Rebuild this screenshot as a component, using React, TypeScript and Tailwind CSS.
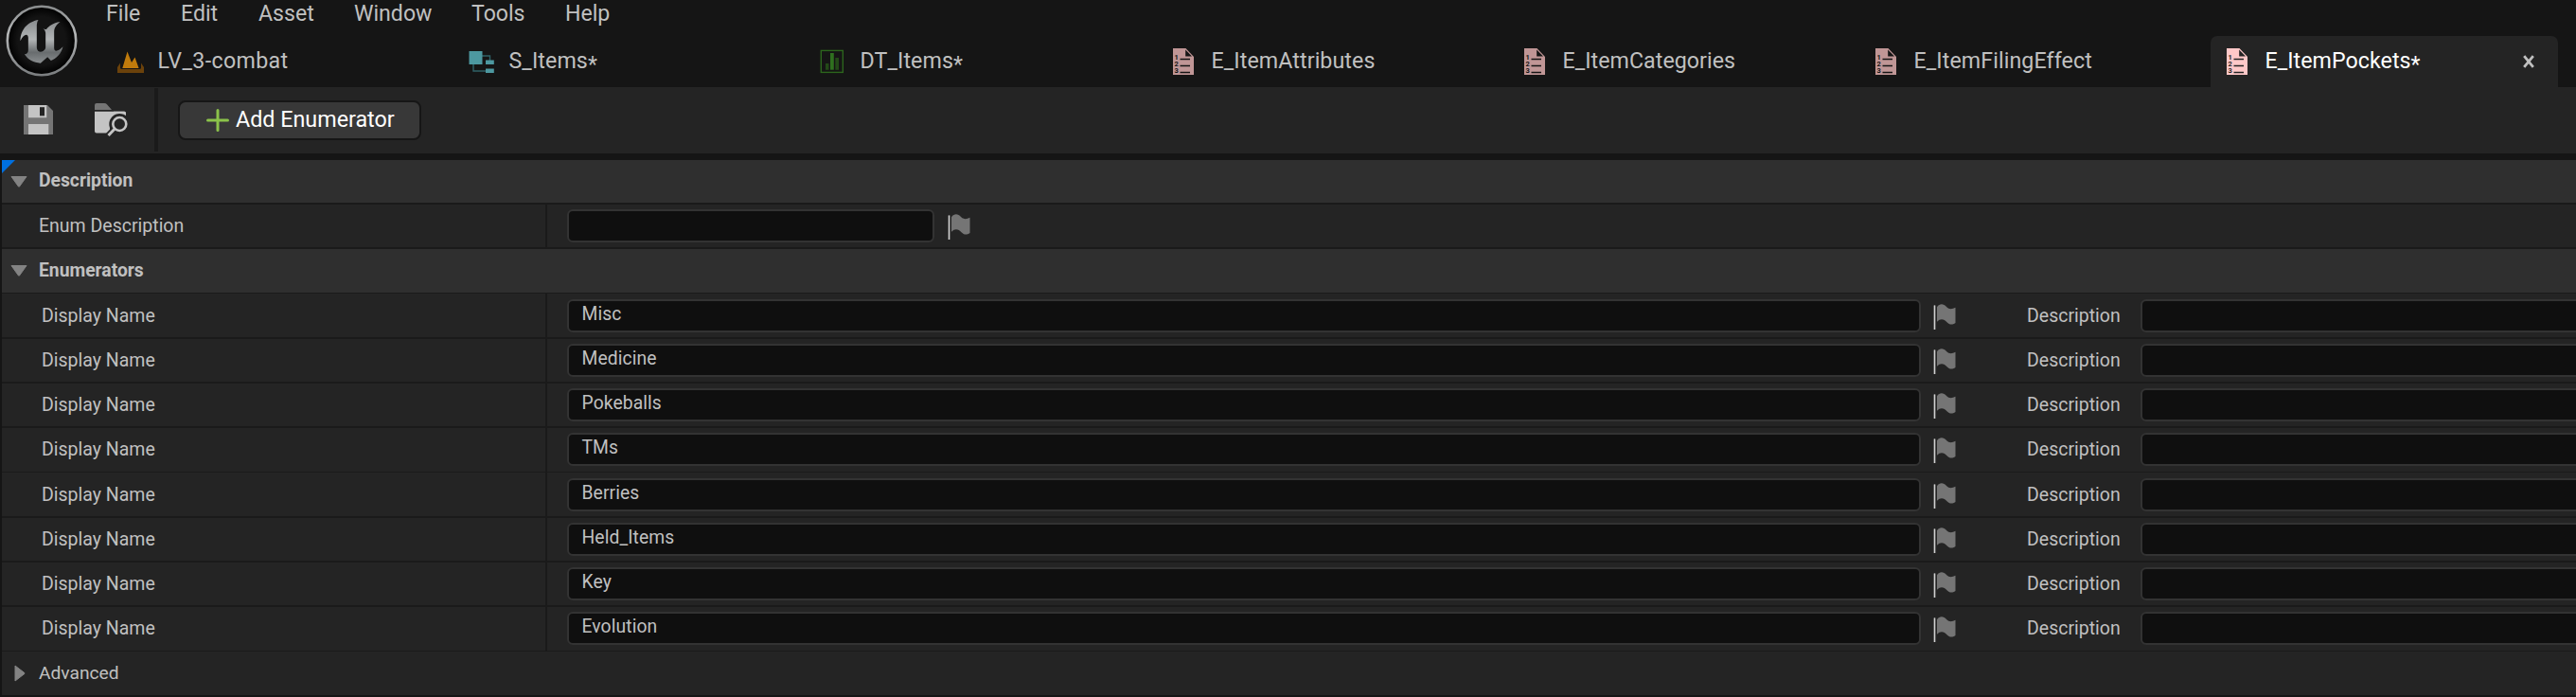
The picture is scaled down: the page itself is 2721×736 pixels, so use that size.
import React from "react";

const MENU = [
  { label: "File", cls: "w-[79px]" },
  { label: "Edit", cls: "w-[82px]" },
  { label: "Asset", cls: "w-[101px]" },
  { label: "Window", cls: "w-[124px]" },
  { label: "Tools", cls: "w-[99px]" },
  { label: "Help", cls: "w-[60px]" },
];

function Logo() {
  return (
    <svg viewBox="0 0 78 78" className="h-[78px] w-[78px]">
      <defs>
        <linearGradient id="ring" x1="0" y1="0" x2="0" y2="1">
          <stop offset="0" stopColor="#8b8e8f" />
          <stop offset="0.4" stopColor="#b4b6b7" />
          <stop offset="1" stopColor="#7b7e80" />
        </linearGradient>
        <linearGradient id="glyph" x1="0" y1="0" x2="0" y2="1">
          <stop offset="0" stopColor="#888b8d" />
          <stop offset="0.45" stopColor="#b2b5b6" />
          <stop offset="0.75" stopColor="#686c6e" />
          <stop offset="1" stopColor="#8a8e90" />
        </linearGradient>
        <radialGradient id="disc">
          <stop offset="0.7" stopColor="#131313" />
          <stop offset="1" stopColor="#000000" />
        </radialGradient>
      </defs>
      <circle cx="39" cy="39" r="36.2" fill="url(#disc)" stroke="url(#ring)" strokeWidth="2.6" />
      <path
        transform="translate(-4.5 -3) scale(0.33333)"
        fill="url(#glyph)"
        d="M120 60C92 65 64 84 63 127C69 113 76 106 83 107Q88 108 88 116V156Q88 168 76 169C88 187 105 196 127 197L149 178L160 189C178 182 192 168 198 145C190 154 181 159 175 158Q170 157 170 150V96C171 82 180 74 189 66C166 70 153 80 146 89Q141 91 135 87Q143 93 143 101V148Q143 156 135 159Q126 164 119 158Q115 154 115 148V76Q115 66 120 60Z"
      />
    </svg>
  );
}

function LevelIcon() {
  return (
    <svg viewBox="0 0 28 28" className="h-7 w-7">
      <path d="M3 15.5V21.5H25V15.5L28 20V26H0V20Z" fill="#6b420b" />
      <path d="M4 22L10.5 3.5L15 15L18.5 9.5L24 22Z" fill="#151515" />
      <path d="M5.3 21L10.5 3.5L15 15L18.5 9.5L22.6 21Z" fill="#c07b0c" />
    </svg>
  );
}

function StructIcon() {
  return (
    <svg viewBox="0 0 28 28" className="h-7 w-7">
      <path d="M14 8H22.5V13M5 16V24H19" fill="none" stroke="#2f6167" strokeWidth="1.4" />
      <path d="M0.5 3H14.5V17H0.5ZM18 12.5H26.8V17H18ZM18 21.5H26.8V26H18Z" fill="#4d98a0" />
    </svg>
  );
}

function TableIcon() {
  return (
    <svg viewBox="0 0 28 28" className="h-7 w-7">
      <rect x="1.3" y="2.4" width="23" height="23" fill="none" stroke="#2c651d" strokeWidth="1.4" />
      <path d="M6 16H9.5V22.7H6ZM16.3 10H20V22.7H16.3Z" fill="#234918" />
      <path d="M11 5H14.8V22.7H11Z" fill="#2f701f" />
    </svg>
  );
}

function EnumIcon({ active }: { active?: boolean }) {
  const ink = active ? "#242424" : "#151515";
  return (
    <svg viewBox="0 0 28 28" className="h-7 w-7">
      <path d="M2 0H15.5L24 9V28H2Z" fill={active ? "#ffc8c8" : "#c09696"} />
      <path d="M15.2 1.4V8.5H22Z" fill={ink} />
      <path d="M9.5 11.5H20M9.5 18.5H20M9.5 25.5H20" stroke={ink} strokeWidth="1.7" />
      <g fill={ink} fontFamily="Roboto, sans-serif" fontSize="7.5" fontWeight="700">
        <text x="3.6" y="12.2">1</text>
        <text x="3.6" y="19.3">2</text>
        <text x="3.6" y="26.4">3</text>
      </g>
    </svg>
  );
}

const TABS = [
  { name: "LV_3-combat", dirty: false, icon: <LevelIcon />, track: "tracking-[0.35px]" },
  { name: "S_Items", dirty: true, icon: <StructIcon />, track: "tracking-[0.1px]" },
  { name: "DT_Items", dirty: true, icon: <TableIcon />, track: "tracking-[0.1px]" },
  { name: "E_ItemAttributes", dirty: false, icon: <EnumIcon />, track: "tracking-[0.1px]" },
  { name: "E_ItemCategories", dirty: false, icon: <EnumIcon />, track: "tracking-[0.05px]" },
  { name: "E_ItemFilingEffect", dirty: false, icon: <EnumIcon />, track: "tracking-[0.1px]" },
];

function TabLabel({ name, dirty, track }: { name: string; dirty: boolean; track: string }) {
  return (
    <span className={`mb-px ml-[15px] text-[23.2px] leading-[53px] ${track}`}>
      {name}
      {dirty && <span className="inline-block align-[-4px] text-[23px] leading-none">*</span>}
    </span>
  );
}

function SaveIcon() {
  return (
    <svg viewBox="0 0 31 31" className="h-[31px] w-[31px]">
      <path d="M0 0H25L31 6V31H0Z" fill="#757575" />
      <path d="M5 0H24.3V13.3H5ZM5 20H26.3V31H5Z" fill="#c4c4c4" />
      <path d="M17 2.2H22V11.3H17Z" fill="#242424" />
    </svg>
  );
}

function BrowseIcon() {
  return (
    <svg viewBox="0 0 36 36" className="h-9 w-9">
      <path d="M0 7V2Q0 0 2 0H10Q12 0 13 1.2L18 7Z" fill="#757575" />
      <path d="M0 8.7H31.5Q33 8.7 33 10.5V20H16V31.5H2Q0 31.5 0 29.5Z" fill="#c4c4c4" />
      <circle cx="26.3" cy="22" r="11" fill="#242424" />
      <path d="M22 26.5L14 35" stroke="#242424" strokeWidth="7" />
      <path d="M20 8.7H31.5Q33 8.7 33 11.2Q27 8.8 20 11.5Z" fill="#c4c4c4" />
      <circle cx="26.3" cy="22" r="7" fill="none" stroke="#c4c4c4" strokeWidth="2.6" />
      <path d="M21.2 27L14.5 34" stroke="#c4c4c4" strokeWidth="3" />
    </svg>
  );
}

function Flag() {
  return (
    <svg viewBox="0 0 24 27" className="h-[27px] w-6 shrink-0">
      <path d="M0.3 1.5H2.7V27H0.3Z" fill="#757575" />
      <path d="M1 1.5H2V27H1Z" fill="#d0d0d0" />
      <path
        d="M4 3.2C7 -0.8 11 -0.3 14 3C17 6 20 5.5 23.5 3.8V20C20 22.2 17.5 22.2 14.5 19.2C11.5 15.8 7.5 15 4 18.8Z"
        fill="#757575"
      />
    </svg>
  );
}

function Category({ title, cls }: { title: string; cls: string }) {
  return (
    <div className={`flex items-center border-[#1a1a1a] bg-[#2f2f2f] ${cls}`}>
      <svg viewBox="0 0 18 12" className="ml-[9px] h-3 w-[18px]">
        <path d="M1 0.5H17L9.5 11Q9 11.8 8.5 11Z" fill="#838383" stroke="#838383" strokeLinejoin="round" />
      </svg>
      <span className="ml-3 text-[19.3px] font-bold">{title}</span>
    </div>
  );
}

const FIELD = "h-[35px] shrink-0 rounded-[6px] border-2 border-[#333333] bg-[#0f0f0f]";

const ROWS = [
  { name: "Misc", cls: "h-[48px] border-b-2 pt-1.5" },
  { name: "Medicine", cls: "h-[47px] border-b-2 pt-[5px]" },
  { name: "Pokeballs", cls: "h-[47px] border-b-2 pt-[5px]" },
  { name: "TMs", cls: "h-[47px] border-b pt-[5px]" },
  { name: "Berries", cls: "h-[48px] border-b-2 pt-1.5" },
  { name: "Held_Items", cls: "h-[47px] border-b-2 pt-[5px]" },
  { name: "Key", cls: "h-[47px] border-b-2 pt-[5px]" },
  { name: "Evolution", cls: "h-[47px] border-b pt-[5px]" },
];

function EnumeratorRow({ name, cls }: { name: string; cls: string }) {
  return (
    <div className={`flex items-start overflow-hidden border-[#1a1a1a] bg-[#242424] ${cls}`}>
      <div className="w-[574px] shrink-0 pl-[42px] text-[19.5px] leading-[35px]">Display Name</div>
      <div className="-mt-2 h-14 w-0.5 shrink-0 bg-[#1a1a1a]" />
      <div className={`ml-[21px] w-[1430px] pl-[13.5px] text-[19.3px] leading-[27px] tracking-[0.1px] ${FIELD}`}>{name}</div>
      <div className="ml-[13px] shrink-0 pt-[5px]">
        <Flag />
      </div>
      <div className="ml-[75px] w-[120px] shrink-0 text-[19.5px] leading-[35px]">Description</div>
      <div className={`w-[480px] ${FIELD}`} />
    </div>
  );
}

export default function App() {
  return (
    <div className="h-[736px] w-[2721px] overflow-hidden bg-[#151515] font-[Roboto,sans-serif] text-[#c0c0c0]">
      <header className="flex h-[92px]">
        <div className="w-[109px] pl-[4.5px] pt-[3.5px]">
          <Logo />
        </div>
        <div className="flex flex-1 flex-col">
          <nav className="flex h-[38px] pl-[3px] text-[23.1px] leading-[29px]">
            {MENU.map((m) => (
              <div key={m.label} className={m.cls}>
                {m.label}
              </div>
            ))}
          </nav>
          <div className="flex h-[54px]">
            {TABS.map((t) => (
              <div key={t.name} className="flex w-[371px] items-center pl-[14.5px]">
                {t.icon}
                <TabLabel name={t.name} dirty={t.dirty} track={t.track} />
              </div>
            ))}
            <div className="flex w-[367px] items-center rounded-t-[7px] bg-[#242424] pl-[14.5px] pr-[25px] text-white">
              <EnumIcon active />
              <TabLabel name="E_ItemPockets" dirty track="tracking-[0.05px]" />
              <svg viewBox="0 0 12 14" className="ml-auto h-3.5 w-3">
                <path d="M1.2 1.2L10.8 12.8M10.8 1.2L1.2 12.8" stroke="#c0c0c0" strokeWidth="2.8" />
              </svg>
            </div>
          </div>
        </div>
      </header>

      <div className="flex h-[70px] bg-[#242424]">
        <div className="flex w-[163px] pl-[25px] pt-[17px]">
          <div className="pt-0.5">
            <SaveIcon />
          </div>
          <div className="ml-[44px]">
            <BrowseIcon />
          </div>
        </div>
        <div className="mt-px h-[67px] w-1 bg-[#1a1a1a]" />
        <div className="ml-[21px] mt-3.5 flex h-[42px] w-[257px] items-center rounded-[8px] border-2 border-[#161616] bg-[#383838] pl-7 text-[23.3px] text-white">
          <svg viewBox="0 0 24 24" className="h-6 w-6">
            <path d="M12 1.5V22.5M1.5 12H22.5" stroke="#8bc34a" strokeWidth="3" strokeLinecap="round" />
          </svg>
          <span className="mb-0.5 ml-[7px] whitespace-nowrap">Add Enumerator</span>
        </div>
      </div>

      <div className="relative mt-[7px] pl-0.5">
        <Category title="Description" cls="h-[47px] border-b-2" />
        <svg viewBox="0 0 14 14" className="absolute left-0.5 top-0 h-3.5 w-3.5">
          <path d="M0 0H14L0 14Z" fill="#0070e0" />
        </svg>
        <div className="flex h-[47px] items-start overflow-hidden border-b-2 border-[#1a1a1a] bg-[#242424] pt-[5px]">
          <div className="w-[574px] shrink-0 pl-[39px] text-[19.5px] leading-[35px]">Enum Description</div>
          <div className="-mt-2 h-14 w-0.5 shrink-0 bg-[#1a1a1a]" />
          <div className={`ml-[21px] w-[388px] ${FIELD}`} />
          <div className="ml-3.5 pt-[5px]">
            <Flag />
          </div>
        </div>
        <Category title="Enumerators" cls="h-[47px] border-b" />
        {ROWS.map((r) => (
          <EnumeratorRow key={r.name} name={r.name} cls={r.cls} />
        ))}
        <div className="flex h-[46px] items-center bg-[#242424]">
          <svg viewBox="0 0 12 18" className="ml-[12.5px] h-[18px] w-3">
            <path d="M1 1V17L10.8 9.5Q11.3 9 10.8 8.5Z" fill="#838383" stroke="#838383" strokeLinejoin="round" />
          </svg>
          <span className="ml-[14.5px] text-[19.2px]">Advanced</span>
        </div>
      </div>
    </div>
  );
}
